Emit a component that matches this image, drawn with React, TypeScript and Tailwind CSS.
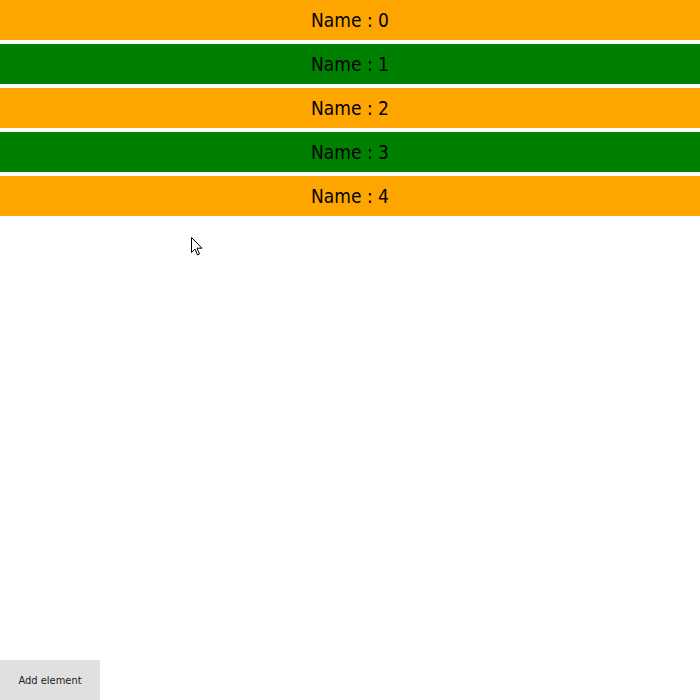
import React, { useState } from 'react';

// Simple list of alternating coloured rows with an add button
const App: React.FC = () => {
  const [items, setItems] = useState<number[]>([0, 1, 2, 3, 4]);

  const addElement = () => {
    setItems((prev) => [...prev, prev.length]);
  };

  return (
    <div className="relative flex min-h-screen flex-col bg-white font-['DejaVu_Sans_Condensed','DejaVu_Sans',Tahoma,sans-serif]">
      <div className="flex flex-col gap-1">
        {items.map((i) => (
          <div
            key={i}
            className={`flex h-10 items-center justify-center text-[19px] text-black ${
              i % 2 === 0 ? 'bg-[#ffa500]' : 'bg-[#008000]'
            }`}
          >
            Name : {i}
          </div>
        ))}
      </div>

      <button
        onClick={addElement}
        className="mt-auto h-10 w-[100px] bg-[#e0e0e0] pt-[2px] text-[11px] text-[#222]"
      >
        Add element
      </button>

      {/* mouse pointer captured in the screenshot */}
      <svg
        className="pointer-events-none absolute left-[191px] top-[237px]"
        width="13"
        height="20"
        viewBox="0 0 13 20"
      >
        <path
          d="M0.5 0.5 L0.5 15.5 L4 12 L6.5 18 L8.5 17 L6 11.2 L11 11.2 Z"
          fill="white"
          stroke="black"
          strokeWidth="1"
        />
      </svg>
    </div>
  );
};

export default App;
